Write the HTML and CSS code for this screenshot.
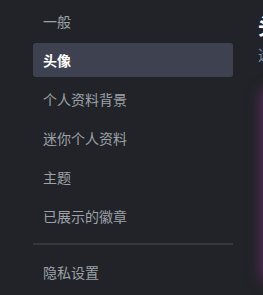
FILE: index.html
```html
<!DOCTYPE html>
<html lang="zh-CN">
<head>
<meta charset="utf-8">
<link rel="stylesheet" href="styles.css">
</head>
<body>
<div class="page">
  <nav class="sidebar">
    <div class="item">一般</div>
    <div class="item active">头像</div>
    <div class="item">个人资料背景</div>
    <div class="item">迷你个人资料</div>
    <div class="item">主题</div>
    <div class="item">已展示的徽章</div>
    <div class="divider"></div>
    <div class="item">隐私设置</div>
  </nav>
  <main class="content">
    <h1 class="title">头像</h1>
    <p class="sub">选择您的头像</p>
    <div class="preview"></div>
  </main>
</div>
</body>
</html>
```

FILE: styles.css
```css
html, body {
  margin: 0;
  padding: 0;
  background: #212328;
  overflow: hidden;
  height: 100%;
}
.page {
  display: flex;
  align-items: flex-start;
  font-family: "Noto Sans CJK SC", "Noto Sans", sans-serif;
  width: 400px;
}
.sidebar {
  margin-left: 33px;
  width: 200px;
  flex: none;
  display: flex;
  flex-direction: column;
  gap: 5px;
  padding-top: 4px;
}
.item {
  height: 34px;
  line-height: 34px;
  padding-left: 10px;
  font-size: 14px;
  color: #9da2a8;
  border-radius: 3px;
}
.item.active {
  background: #3d4150;
  color: #ffffff;
  font-weight: bold;
}
.divider {
  height: 2px;
  background: #34373c;
  margin: 5px 0;
}
.content {
  margin-left: 25px;
  display: flex;
  flex-direction: column;
}
.title {
  margin: 9px 0 0 0;
  font-size: 22px;
  line-height: 30px;
  color: #ffffff;
  font-weight: bold;
}
.sub {
  margin: 6px 0 0 0;
  font-size: 14px;
  line-height: 18px;
  color: #7a8fa3;
}
.preview {
  margin: 32px 0 0 10px;
  width: 120px;
  height: 180px;
  background: #232429;
  box-shadow: 0 0 14px 5px rgba(125, 50, 125, 0.8);
}
```
